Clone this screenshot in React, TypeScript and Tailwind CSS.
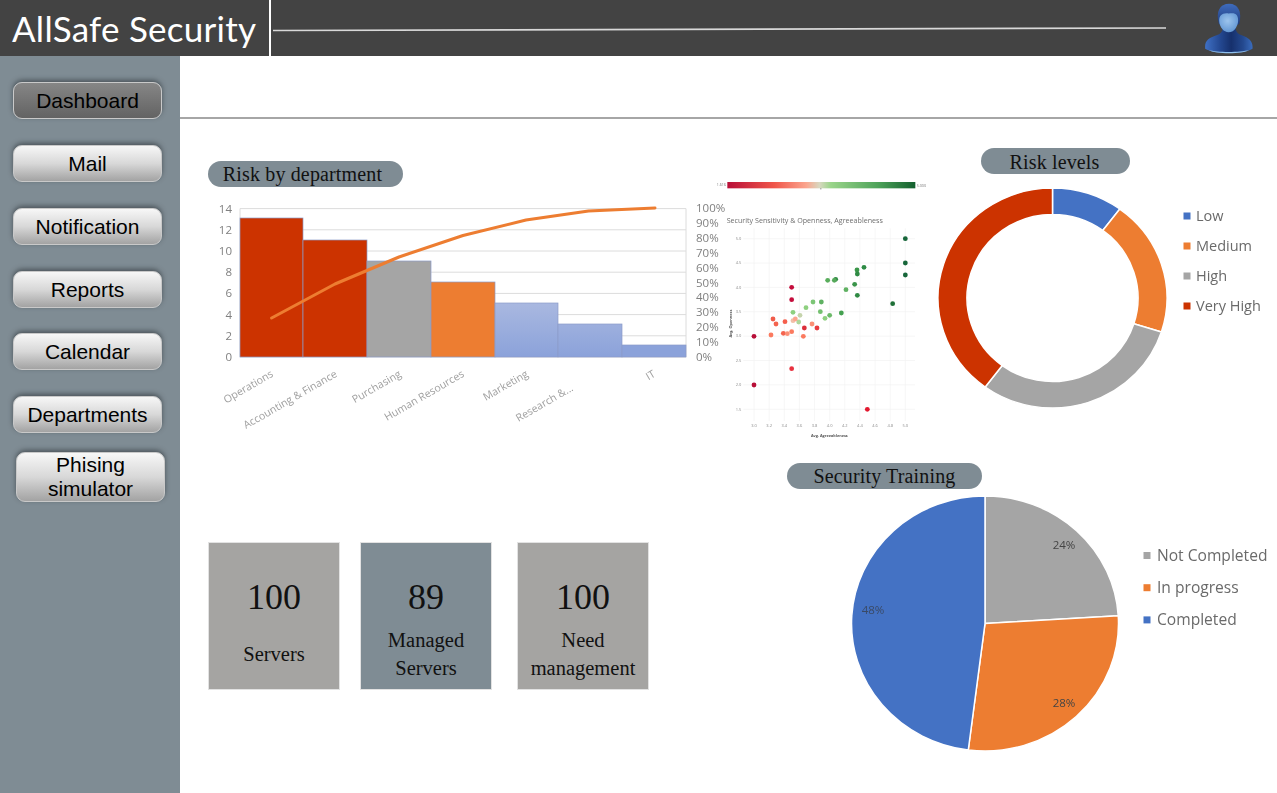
const serif = "font-['Liberation_Serif',serif]";

function NavButton({ label, active, className = "" }: { label: string; active?: boolean; className?: string }) {
  return (
    <button
      className={`w-[149px] rounded-[9px] border border-[#c9c9c9] text-black text-[21px] leading-[24px] font-['Liberation_Sans',sans-serif] shadow-[0_-2px_5px_rgba(40,45,50,0.6)] ${
        active ? "bg-gradient-to-b from-[#868686] to-[#636363]" : "bg-gradient-to-b from-[#f7f7f7] via-[#d8d8d8] to-[#a3a3a3]"
      } ${className}`}
    >
      {label}
    </button>
  );
}

function Pill({ label, className = "" }: { label: string; className?: string }) {
  return (
    <div className={`h-[26px] rounded-full bg-[#7f8c94] flex items-center justify-center text-[#111] text-[20px] tracking-[0.15px] ${serif} ${className}`}>
      {label}
    </div>
  );
}

function StatCard({ value, lines, color, className = "" }: { value: string; lines: string[]; color: string; className?: string }) {
  return (
    <div className={`w-[132px] h-[148px] border border-[#e2e2e2] flex flex-col items-center pt-[34px] text-[#111] ${serif} ${color} ${className}`}>
      <div className="text-[36px] leading-[40px]">{value}</div>
      <div className="mt-[9px] h-[56px] flex flex-col justify-center items-center text-[20.5px] leading-[28px]">
        {lines.map((l) => (
          <div key={l}>{l}</div>
        ))}
      </div>
    </div>
  );
}

function Avatar() {
  return (
    <svg viewBox="160 0 155 165" className="w-[52px] h-[55px] block blur-[0.3px]">
      <defs>
        <linearGradient id="body" x1="0" y1="0" x2="1" y2="0">
          <stop offset="0" stopColor="#3f70c4" />
          <stop offset="0.3" stopColor="#254a94" />
          <stop offset="0.55" stopColor="#16306c" />
          <stop offset="0.8" stopColor="#24498f" />
          <stop offset="1" stopColor="#3a6cbc" />
        </linearGradient>
        <radialGradient id="face" cx="0.45" cy="0.4" r="0.7">
          <stop offset="0" stopColor="#9cc4ec" />
          <stop offset="1" stopColor="#5a90d0" />
        </radialGradient>
        <linearGradient id="hair" x1="0" y1="0" x2="0" y2="1">
          <stop offset="0" stopColor="#3f6cbe" />
          <stop offset="1" stopColor="#1c3878" />
        </linearGradient>
      </defs>
      <path d="M166 146 C164 122 176 114 200 106 C212 102 217 96 219 84 L257 84 C259 96 264 102 276 106 C298 114 310 124 308 146 C290 156 262 158 236 158 C210 158 184 156 166 146Z" fill="url(#body)" />
      <path d="M176 150 C200 158 272 158 298 150 C280 163 196 163 176 150Z" fill="#8fc0ee" />
      <path d="M207 72 C197 34 210 11 238 11 C264 11 278 34 268 72 C258 80 216 80 207 72Z" fill="url(#hair)" />
      <path d="M208 62 C208 48 216 39 232 40 C244 41 254 36 261 46 C267 56 266 72 258 84 C250 100 226 100 218 88 C212 80 208 72 208 62Z" fill="url(#face)" />
    </svg>
  );
}

const bars = [
  { x: 240, w: 63, top: 218, c: "#cc3300" },
  { x: 303, w: 64, top: 240, c: "#cc3300" },
  { x: 367, w: 64, top: 261, c: "#a5a5a5" },
  { x: 431, w: 64, top: 282, c: "#ed7d31" },
  { x: 495, w: 63, top: 303, c: "url(#blueBar)" },
  { x: 558, w: 64, top: 324, c: "url(#blueBar)" },
  { x: 622, w: 64, top: 345, c: "#8ba2da" },
];

const catLabels: [string, number, number][] = [
  ["Operations", 274, 376],
  ["Accounting & Finance", 338, 376],
  ["Purchasing", 402, 376],
  ["Human Resources", 465, 376],
  ["Marketing", 529, 376],
  ["Research &...", 574, 390],
  ["IT", 656, 376],
];

function ParetoChart() {
  const yTicks = [14, 12, 10, 8, 6, 4, 2, 0];
  const pct = [100, 90, 80, 70, 60, 50, 40, 30, 20, 10, 0];
  return (
    <svg viewBox="180 195 520 245" className="w-[520px] h-[245px] mt-[8px] block overflow-visible blur-[0.4px] font-['Open_Sans',sans-serif]">
      <defs>
        <linearGradient id="blueBar" gradientUnits="userSpaceOnUse" x1="0" y1="303" x2="0" y2="357">
          <stop offset="0" stopColor="#a9b8e0" />
          <stop offset="1" stopColor="#8ba2da" />
        </linearGradient>
      </defs>
      {yTicks.map((t) => {
        const y = 357 - t * 10.6;
        return (
          <g key={t}>
            <line x1="240" x2="686" y1={y} y2={y} stroke="#dcdcdc" strokeWidth="1" />
            <text x="232" y={y + 4} textAnchor="end" fontSize="11.5" fill="#808080">{t}</text>
          </g>
        );
      })}
      <line x1="240" x2="240" y1="208.6" y2="357" stroke="#dcdcdc" />
      <line x1="686" x2="686" y1="208.6" y2="357" stroke="#dcdcdc" />
      {bars.map((b) => (
        <rect key={b.x} x={b.x} y={b.top} width={b.w} height={357 - b.top} fill={b.c} stroke="#8c9cc8" strokeWidth="0.7" />
      ))}
      <polyline
        points="271.6,318 335,284 399,257 463,235.5 526,220 588.5,211 655,208"
        fill="none"
        stroke="#ed7d31"
        strokeWidth="3"
        strokeLinecap="round"
        strokeLinejoin="round"
      />
      {pct.map((p, i) => (
        <text key={p} x="696" y={212 + i * 14.9} fontSize="11.5" fill="#808080">{p}%</text>
      ))}
      {catLabels.map(([t, x, y]) => (
        <text key={t} x={x} y={y} textAnchor="end" fontSize="10.6" fill="#a0a0a0" transform={`rotate(-30 ${x} ${y})`}>{t}</text>
      ))}
    </svg>
  );
}

const dots: [number, number, string][] = [
  [616, 191, "#17663a"], [616, 264, "#17663a"], [616, 300, "#17663a"], [492, 277, "#2e8b45"], [471, 285, "#3a9648"],
  [472, 297, "#2f8a44"], [407, 313, "#2f8a44"], [403, 316, "#56a95a"], [383, 316, "#59ad5c"], [464, 328, "#3a944a"],
  [438, 344, "#5fb162"], [472, 361, "#2f8a44"], [578, 386, "#1f7038"], [275, 337, "#c40d3c"], [275, 374, "#c40d3c"],
  [339, 381, "#7cc576"], [364, 381, "#5fb162"], [318, 398, "#8ed07f"], [279, 412, "#8ed07f"], [361, 410, "#74c06f"],
  [389, 421, "#6cba69"], [375, 430, "#8ed07f"], [424, 414, "#44a050"], [300, 421, "#c5d4ac"], [296, 441, "#aed69b"],
  [279, 437, "#f2bfa8"], [286, 432, "#fba58e"], [219, 432, "#f05c4a"], [255, 440, "#f55f4d"], [228, 447, "#f4644f"],
  [336, 447, "#fb8f75"], [313, 459, "#dc2f3a"], [351, 459, "#e83a3e"], [275, 470, "#fb7a5f"], [250, 475, "#f4644f"],
  [262, 476, "#fb8f75"], [213, 480, "#fb7a5f"], [310, 484, "#fb7a5f"], [162, 484, "#b80f38"], [275, 581, "#e8323f"],
  [162, 630, "#b80f38"], [502, 703, "#e2182f"],
];

function ScatterChart() {
  const xs = [3.0, 3.2, 3.4, 3.6, 3.8, 4.0, 4.2, 4.4, 4.6, 4.8, 5.0];
  const ys = [5.0, 4.5, 4.0, 3.5, 3.0, 2.5, 2.0, 1.5];
  return (
    <svg viewBox="0 0 690 810" className="w-[230px] h-[270px] mt-[55px] block blur-[0.3px] font-['Open_Sans',sans-serif]">
      <defs>
        <linearGradient id="scale" x1="0" y1="0" x2="1" y2="0">
          <stop offset="0" stopColor="#b80f38" />
          <stop offset="0.25" stopColor="#f0564a" />
          <stop offset="0.42" stopColor="#fba58e" />
          <stop offset="0.49" stopColor="#d8d8c0" />
          <stop offset="0.55" stopColor="#9ad58a" />
          <stop offset="0.8" stopColor="#4ea35a" />
          <stop offset="1" stopColor="#14602f" />
        </linearGradient>
      </defs>
      <rect x="82" y="21" width="564" height="19" fill="url(#scale)" />
      <rect x="361" y="40" width="3" height="3" fill="#666" />
      <text x="78" y="34" textAnchor="end" fontSize="11" fill="#777">1.616</text>
      <text x="650" y="35" fontSize="11" fill="#777">5.000</text>
      <text x="80" y="143" fontSize="21.4" fill="#6f6f6f">Security Sensitivity &amp; Openness, Agreeableness</text>
      {xs.map((v, i) => {
        const x = 162 + i * 45.4;
        return (
          <g key={v}>
            <line x1={x} x2={x} y1="160" y2="738" stroke="#f1f1f1" strokeWidth="2" />
            <text x={x} y="757" textAnchor="middle" fontSize="12" fill="#8a8a8a">{v.toFixed(1)}</text>
          </g>
        );
      })}
      {ys.map((v, i) => {
        const y = 191 + i * 73.1;
        return (
          <g key={v}>
            <line x1="130" x2="645" y1={y} y2={y} stroke="#f1f1f1" strokeWidth="2" />
            <text x="124" y={y + 4} textAnchor="end" fontSize="12" fill="#8a8a8a">{v.toFixed(1)}</text>
          </g>
        );
      })}
      <text x="388" y="785" textAnchor="middle" fontSize="11.5" fontWeight="700" fill="#555">Avg. Agreeableness</text>
      <text x="96" y="446" textAnchor="middle" fontSize="11.5" fontWeight="700" fill="#555" transform="rotate(-90 96 446)">Avg. Openness</text>
      {dots.map(([x, y, c], i) => (
        <circle key={i} cx={x} cy={y} r="7.2" fill={c} />
      ))}
    </svg>
  );
}

function ell(cx: number, cy: number, rx: number, ry: number, frac: number) {
  const a = frac * 2 * Math.PI;
  return `${(cx + rx * Math.sin(a)).toFixed(2)} ${(cy - ry * Math.cos(a)).toFixed(2)}`;
}

function DonutChart() {
  const legend: [string, string][] = [["Low", "#4472c4"], ["Medium", "#ed7d31"], ["High", "#a5a5a5"], ["Very High", "#cc3300"]];
  const cx = 1052.5, cy = 298, ox = 114.5, oy = 110, ix = 85.5, iy = 83.5;
  const segs: [number, number, string][] = [[0, 0.1, "#4472c4"], [0.1, 0.3, "#ed7d31"], [0.3, 0.6, "#a5a5a5"], [0.6, 1, "#cc3300"]];
  return (
    <svg viewBox="930 175 347 245" className="w-[347px] h-[245px] mt-px block blur-[0.3px] font-['Open_Sans',sans-serif]">
      <g stroke="#fff" strokeWidth="1.5" strokeLinejoin="round">
        {segs.map(([a, b, c]) => (
          <path
            key={c}
            fill={c}
            d={`M${ell(cx, cy, ox, oy, a)} A${ox} ${oy} 0 0 1 ${ell(cx, cy, ox, oy, b)} L${ell(cx, cy, ix, iy, b)} A${ix} ${iy} 0 0 0 ${ell(cx, cy, ix, iy, a)}Z`}
          />
        ))}
      </g>
      {legend.map(([t, c], i) => (
        <g key={t}>
          <rect x="1183.5" y={212.5 + i * 30} width="7" height="7" fill={c} />
          <text x="1196" y={221 + i * 30} fontSize="14.5" fill="#6a6a6a">{t}</text>
        </g>
      ))}
    </svg>
  );
}

function PieChart() {
  const legend: [string, string][] = [["Not Completed", "#a5a5a5"], ["In progress", "#ed7d31"], ["Completed", "#4472c4"]];
  const cx = 985, cy = 623.5, rx = 133.5, ry = 127.5;
  const segs: [number, number, string][] = [[0, 0.2404, "#a5a5a5"], [0.2404, 0.52, "#ed7d31"], [0.52, 1, "#4472c4"]];
  return (
    <svg viewBox="780 490 497 280" className="w-[497px] h-[280px] mt-px block blur-[0.3px] font-['Open_Sans',sans-serif]">
      <g stroke="#fff" strokeWidth="1.5" strokeLinejoin="round">
        {segs.map(([a, b, c]) => (
          <path key={c} fill={c} d={`M${cx} ${cy} L${ell(cx, cy, rx, ry, a)} A${rx} ${ry} 0 0 1 ${ell(cx, cy, rx, ry, b)}Z`} />
        ))}
      </g>
      <text x="1064" y="549" textAnchor="middle" fontSize="11.5" fill="#444">24%</text>
      <text x="1064" y="707" textAnchor="middle" fontSize="11.5" fill="#444">28%</text>
      <text x="873" y="614" textAnchor="middle" fontSize="11.5" fill="#3a4a66">48%</text>
      {legend.map(([t, c], i) => (
        <g key={t}>
          <rect x="1143.5" y={552 + i * 32.2} width="7" height="7" fill={c} />
          <text x="1157" y={561 + i * 32.2} fontSize="15.6" fill="#6a6a6a">{t}</text>
        </g>
      ))}
    </svg>
  );
}

export default function App() {
  return (
    <div className="w-full h-[793px] flex flex-col overflow-hidden bg-white">
      <header className="h-[56px] shrink-0 bg-[#434343] flex items-stretch">
        <div className="w-[269px] pl-[12px] flex items-center text-white text-[35px] tracking-[0.25px] font-['Lato',sans-serif]">AllSafe Security</div>
        <div className="w-[2px] bg-white" />
        <svg viewBox="0 0 893 56" className="w-[893px] h-[56px] ml-[2px] block">
          <line x1="0" y1="30.5" x2="893" y2="28" stroke="#d8d8d8" strokeWidth="1.6" />
        </svg>
        <div className="ml-[37px] flex items-start">
          <Avatar />
        </div>
      </header>
      <div className="flex-1 flex min-h-0">
        <aside className="w-[180px] shrink-0 bg-[#7f8c94] pt-[26px] pl-[13px] flex flex-col">
          <NavButton label="Dashboard" active className="h-[37px]" />
          <NavButton label="Mail" className="h-[37px] mt-[26px]" />
          <NavButton label="Notification" className="h-[37px] mt-[26px]" />
          <NavButton label="Reports" className="h-[37px] mt-[26px]" />
          <NavButton label="Calendar" className="h-[37px] mt-[25px]" />
          <NavButton label="Departments" className="h-[37px] mt-[26px]" />
          <NavButton label="Phising simulator" className="h-[50px] mt-[19px] ml-[3px] px-[20px]" />
        </aside>
        <main className="flex-1 min-w-0 flex flex-col">
          <div className="h-[64px] shrink-0 pt-[61px]">
            <div className="h-[2px] bg-[#a6a6a6]" />
          </div>
          <section className="h-[335px] shrink-0 flex">
            <div className="w-[520px] shrink-0">
              <Pill label="Risk by department" className="w-[195px] ml-[28px] mt-[41px] pr-[6px]" />
              <ParetoChart />
            </div>
            <div className="w-[230px] shrink-0">
              <ScatterChart />
            </div>
            <div className="w-[347px] shrink-0">
              <Pill label="Risk levels" className="w-[149px] ml-[51px] mt-[28px] pt-px pr-[2px]" />
              <DonutChart />
            </div>
          </section>
          <section className="flex-1 flex">
            <div className="w-[600px] shrink-0 flex items-start pt-[87px] pl-[28px]">
              <StatCard value="100" lines={["Servers"]} color="bg-[#a5a4a2]" />
              <StatCard value="89" lines={["Managed", "Servers"]} color="bg-[#7f8c94]" className="ml-[20px]" />
              <StatCard value="100" lines={["Need", "management"]} color="bg-[#a5a4a2]" className="ml-[25px]" />
            </div>
            <div className="w-[497px] shrink-0">
              <Pill label="Security Training" className="w-[195px] ml-[7px] mt-[8px]" />
              <PieChart />
            </div>
          </section>
        </main>
      </div>
    </div>
  );
}
